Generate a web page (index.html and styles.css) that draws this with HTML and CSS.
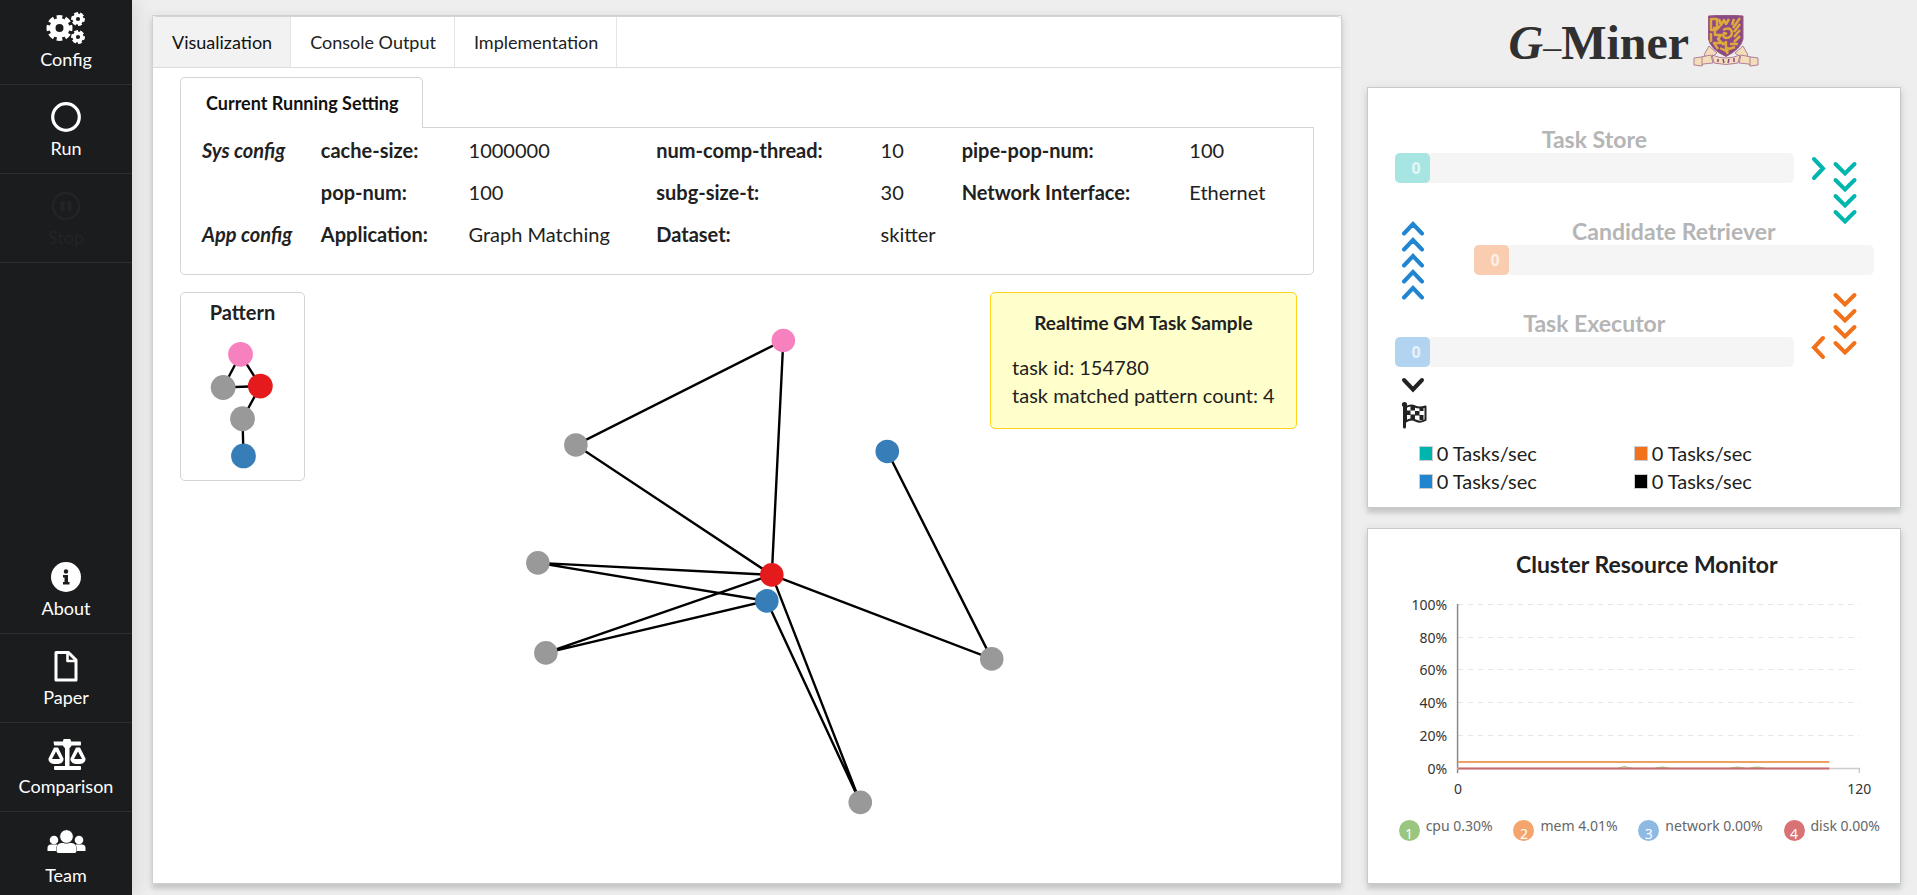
FILE: index.html
```html
<!DOCTYPE html>
<html lang="en">
<head>
<meta charset="utf-8">
<title>G-Miner</title>
<link rel="stylesheet" href="styles.css">
</head>
<body>
<div class="app">
  <nav class="sidebar">
    <div class="menu">
      <button class="menu-item menu-first" type="button">
        <svg class="menu-icon" viewBox="0 0 40 32" fill="none" stroke="#fff">
          <circle cx="13.500" cy="16" r="7" stroke-width="6"/><circle cx="13.500" cy="16" r="10.500" stroke-width="5" pathLength="16" stroke-dasharray="1.300 .7" stroke-dashoffset=".65"/>
          <circle cx="32" cy="7" r="3.800" stroke-width="3.400"/><circle cx="32" cy="7" r="5.400" stroke-width="3" pathLength="12" stroke-dasharray="1.300 .7" stroke-dashoffset=".3"/>
          <circle cx="32" cy="25" r="3.800" stroke-width="3.400"/><circle cx="32" cy="25" r="5.400" stroke-width="3" pathLength="12" stroke-dasharray="1.300 .7" stroke-dashoffset=".3"/>
        </svg>
        <span>Config</span>
      </button>
      <button class="menu-item" type="button">
        <svg class="menu-icon" viewBox="0 0 40 32"><circle cx="20" cy="16" r="13.300" fill="none" stroke="#fff" stroke-width="3.200"/></svg>
        <span>Run</span>
      </button>
      <button class="menu-item menu-off" type="button" disabled>
        <svg class="menu-icon" viewBox="0 0 40 32"><circle cx="20" cy="16" r="13" fill="none" stroke="currentColor" stroke-width="2.500"/><path d="M14.500 11h4v10h-4zM21.500 11h4v10h-4z" fill="currentColor"/></svg>
        <span>Stop</span>
      </button>
    </div>
    <div class="menu">
      <button class="menu-item" type="button">
        <svg class="menu-icon" viewBox="0 0 40 32"><circle cx="20" cy="16" r="15" fill="#fff"/><circle cx="20" cy="10.500" r="2.200" fill="#1b1c1d"/><path d="M17 14h5v7h1.500v2.500h-6.500V21h1.500v-4.500H17z" fill="#1b1c1d"/></svg>
        <span>About</span>
      </button>
      <button class="menu-item" type="button">
        <svg class="menu-icon" viewBox="0 0 40 32" fill="none" stroke="#fff" stroke-width="3" stroke-linejoin="round"><path d="M10 2.500h12.500l7.500 7.500v20H10z"/><path d="M21.500 3v8H30" stroke-width="2.600"/></svg>
        <span>Paper</span>
      </button>
      <button class="menu-item" type="button">
        <svg class="menu-icon" viewBox="0 0 40 32" fill="#fff"><path d="M7.500 2.500h9.500a4 3.500 0 0 1 8 0h9a1 1 0 0 1 1 1v2a1 1 0 0 1-1 1h-8.500a4 4 0 0 1-2 2.500v18H34a1 1 0 0 1 1 1v2a1 1 0 0 1-1 1H9a1 1 0 0 1-1-1v-2a1 1 0 0 1 1-1h10V9a4 4 0 0 1-2-2.500H9a1 1 0 0 1-1-1z"/><path fill-rule="evenodd" d="M8 8.500h4l5.500 11q.7 5.500-7.500 5.500t-7.500-5.500zM10 12.500l-4 7.500h8zM30 8.500h4l5.500 11q.7 5.500-7.500 5.500t-7.500-5.500zM32 12.500l-4 7.500h8z"/></svg>
        <span>Comparison</span>
      </button>
      <button class="menu-item menu-last" type="button">
        <svg class="menu-icon" viewBox="0 0 40 32" fill="#fff"><circle cx="8" cy="12" r="4.300"/><circle cx="33" cy="12" r="4.300"/><path d="M1.500 23v-3q0-3.500 3.500-3.500h6.500q-1.500 2-1.500 6.500zM39.500 23v-3q0-3.500-3.500-3.500h-6.500q1.500 2 1.500 6.500z"/><path d="M10.500 22q0-7 5-7h10q5 0 5 7v1q0 2-2 2h-16q-2 0-2-2z"/><circle cx="20.500" cy="8.500" r="6.800" stroke="#1b1c1d" stroke-width=".8"/></svg>
        <span>Team</span>
      </button>
    </div>
  </nav>

  <main class="main">
    <div class="tabs" role="tablist">
      <button class="tab tab-active" type="button" role="tab" aria-selected="true">Visualization</button>
      <button class="tab" type="button" role="tab">Console Output</button>
      <button class="tab" type="button" role="tab">Implementation</button>
    </div>

    <section class="setting">
      <h2 class="setting-tab">Current Running Setting</h2>
      <div class="setting-body">
        <table class="config">
          <colgroup><col class="c-group"><col class="c-key1"><col class="c-val1"><col class="c-key2"><col class="c-val2"><col class="c-key3"><col></colgroup>
          <tbody>
            <tr><th class="group">Sys config</th><th>cache-size:</th><td>1000000</td><th>num-comp-thread:</th><td>10</td><th>pipe-pop-num:</th><td>100</td></tr>
            <tr><td></td><th>pop-num:</th><td>100</td><th>subg-size-t:</th><td>30</td><th>Network Interface:</th><td>Ethernet</td></tr>
            <tr><th class="group">App config</th><th>Application:</th><td>Graph Matching</td><th>Dataset:</th><td>skitter</td><td></td><td></td></tr>
          </tbody>
        </table>
      </div>
    </section>

    <section class="stage">
      <svg class="graph" viewBox="153 292 1188 590" preserveAspectRatio="xMidYMin meet">
        <g stroke="#000" stroke-width="2.400">
          <path d="M783.500 340.500L576 445L772 575zM538 563L772 575L546 653L767 601zM772 575L992 659L887.500 451.500M772 575L860.500 802.500L767 601" fill="none"/>
        </g>
        <g fill="#999"><circle cx="576" cy="445" r="11.800"/><circle cx="538" cy="563" r="11.800"/><circle cx="546" cy="653" r="11.800"/><circle cx="992" cy="659" r="11.800"/><circle cx="860.500" cy="802.500" r="11.800"/></g>
        <circle cx="783.500" cy="340.500" r="11.800" fill="#f781bf"/>
        <circle cx="772" cy="575" r="11.800" fill="#e41a1c"/>
        <g fill="#377eb8"><circle cx="767" cy="601" r="11.800"/><circle cx="887.500" cy="451.500" r="11.800"/></g>
      </svg>
      <div class="overlay">
        <figure class="pattern">
          <figcaption>Pattern</figcaption>
          <svg class="pattern-graph" viewBox="180 328 124 150">
            <path d="M243 456L242 418.500L260 385.500L222.500 387L240 353.500L260 385.500" fill="none" stroke="#000" stroke-width="2.400"/>
            <circle cx="240" cy="353.500" r="12.500" fill="#f781bf"/><circle cx="222.500" cy="387" r="12.500" fill="#999"/><circle cx="260" cy="385.500" r="12.500" fill="#e41a1c"/><circle cx="242" cy="418.500" r="12.500" fill="#999"/><circle cx="243" cy="456" r="12.500" fill="#377eb8"/>
          </svg>
        </figure>
        <aside class="note">
          <h3>Realtime GM Task Sample</h3>
          <p>task id: 154780</p>
          <p>task matched pattern count: 4</p>
        </aside>
      </div>
    </section>
  </main>

  <div class="side">
    <header class="brand">
      <h1><span class="brand-g">G</span><span class="brand-dash">–</span>Miner</h1>
      <svg class="crest" viewBox="0 0 66 52">
        <path d="M15.500 1q17.500-2 34.500 0v23q-2 10-17 17.500q-15.500-7-17.500-17.500z" fill="#8a4a86"/>
        <g fill="none" stroke="#e0a93c" stroke-width="2.500" stroke-linejoin="round">
          <path d="M18 3v12h5M18 4h6v9h-4M26 4l2 6l3-5l2 4l3-5M18 18v9M22 16v4h6l-3 4l4 4h-8l4 6M30 15q7-4 9 2q0 6-6 6q-4-1-2-5l3 1M27 11l-4 4M29 30l4-3v9l-6-3M40 13l7-10M41 17l6-8M41 22l6-7M41 27l6-6M37 29l8 0M36 34l6-2M34 39l1-7M39 10l2-6"/>
        </g>
        <path d="M15.500 1q17.500-2 34.500 0v23q-2 10-17 17.500q-15.500-7-17.500-17.500z" fill="none" stroke="#9a5a80" stroke-width="1"/>
        <g fill="#f3deb9" stroke="#a87395" stroke-width=".9" stroke-linejoin="round">
          <path d="M16 31l-5 9l5 4l8-6zM50 31l5 9l-5 4l-8-6z"/>
          <path d="M1 43l7-1l10-2l2 8l-10 1l-1 2l-8-1zM65 43l-7-1l-10-2l-2 8l10 1l1 2l8-1z"/>
          <path d="M9 42v8M57 42v8"/>
          <path d="M19 40q14 6 28 0l-2 8q-12 3-24 0z"/>
        </g>
        <path d="M25 44v3M30 44l1 4M36 44l-1 4M41 43v4" stroke="#8a4a86" stroke-width="1.500"/>
      </svg>
    </header>

    <section class="card pipeline">
      <div class="flow">
        <div class="queue queue-store"><h3>Task Store</h3><div class="bar"><span class="fill teal">0</span></div></div>
        <div class="queue queue-retriever"><h3>Candidate Retriever</h3><div class="bar"><span class="fill orange">0</span></div></div>
        <div class="queue queue-executor"><h3>Task Executor</h3><div class="bar"><span class="fill blue">0</span></div></div>
        <svg class="arrows arrows-teal" viewBox="0 0 46 64"><path d="M4 4l9 9.500l-9 9.500M25.500 9l9.500 9.500l9.500-9.500M25.500 25l9.500 9.500l9.500-9.500M25.500 41l9.500 9.500l9.500-9.500M25.500 57l9.500 9.500l9.500-9.500"/></svg>
        <svg class="arrows arrows-orange" viewBox="0 0 46 64"><path d="M25.500 3l9.500 9.500l9.500-9.500M25.500 19l9.500 9.500l9.500-9.500M25.500 35l9.500 9.500l9.500-9.500M25.500 51l9.500 9.500l9.500-9.500M13 46l-9 9.500l9 9.500"/></svg>
        <svg class="arrows arrows-blue" viewBox="0 0 24 80"><path d="M3 12.500l9-9.500l9 9.500M3 28.500l9-9.500l9 9.500M3 44.500l9-9.500l9 9.500M3 60.500l9-9.500l9 9.500M3 76.500l9-9.500l9 9.500"/></svg>
      </div>
      <div class="finish">
        <svg class="arrows arrows-black" viewBox="0 0 24 16"><path d="M3 3l9 9.500l9-9.500"/></svg>
        <svg class="flag" viewBox="0 0 26 28"><circle cx="3.500" cy="3.500" r="2.600" fill="#222"/><path d="M3.500 4v22" stroke="#222" stroke-width="3" stroke-linecap="round"/><path d="M5 6q5-2.500 9-.5t10.500 0v13.500q-5 3-10 .5t-9.500 1z" fill="#fff" stroke="#222" stroke-width="2" stroke-linejoin="round"/><path d="M9.500 5h4.500v4.500H9.500zM18.500 6h4v4h-4zM5 9.500h4.500V14H5zM14 10h4.500v4.500H14zM9.500 13.500H14V18H9.500zM18.500 14h4v5h-4z" fill="#222"/></svg>
      </div>
      <ul class="rates">
        <li><i class="swatch sw-teal"></i>0 Tasks/sec</li>
        <li><i class="swatch sw-orange"></i>0 Tasks/sec</li>
        <li><i class="swatch sw-blue"></i>0 Tasks/sec</li>
        <li><i class="swatch sw-black"></i>0 Tasks/sec</li>
      </ul>
    </section>

    <section class="card monitor">
      <h2>Cluster Resource Monitor</h2>
      <svg class="chart" viewBox="1368 590 532 212">
        <path d="M1458 604.500H1859M1458 637.500H1859M1458 669.500H1859M1458 702.500H1859M1458 735.500H1859" stroke="#e6e6e6" stroke-dasharray="5 5" fill="none"/>
        <path d="M1457.500 604V773" stroke="#888" stroke-width="1.500"/>
        <path d="M1457 768.500H1859V773" stroke="#ccc" stroke-width="1.500" fill="none"/>
        <path d="M1458 762h371" stroke="#f0a063" stroke-width="2"/>
        <path d="M1618 768l6-1.500l8 1.500M1655 768l8-1.200l6 1.200M1730 768l7-1.200l7 1.200M1750 768l7-1.200l7 1.200" stroke="#99c57d" fill="none"/>
        <path d="M1458 768.500h371" stroke="#c86a6e" stroke-width="2"/>
        <g class="axis" text-anchor="end">
          <text x="1447" y="610">100%</text><text x="1447" y="643">80%</text><text x="1447" y="675">60%</text><text x="1447" y="708">40%</text><text x="1447" y="741">20%</text><text x="1447" y="774">0%</text>
        </g>
        <g class="axis" text-anchor="middle"><text x="1458" y="794">0</text><text x="1859" y="794">120</text></g>
      </svg>
      <ul class="series">
        <li><span class="dot dot-cpu">1</span>cpu 0.30%</li>
        <li><span class="dot dot-mem">2</span>mem 4.01%</li>
        <li><span class="dot dot-net">3</span>network 0.00%</li>
        <li><span class="dot dot-disk">4</span>disk 0.00%</li>
      </ul>
    </section>
  </div>
</div>
</body>
</html>
```
FILE: styles.css
```css
* { box-sizing: border-box; }
body {
  margin: 0;
  background: #eee;
  color: #212121;
  font-family: Lato, "Open Sans", sans-serif;
  font-size: 20px;
  line-height: 28px;
}
h1, h2, h3, p, ul, figure { margin: 0; padding: 0; }
h2, h3 { font-weight: 700; }
ul { list-style: none; }
button { font: inherit; color: inherit; border: 0; background: none; cursor: pointer; }

.app { display: flex; min-height: 100vh; }

.sidebar {
  flex: 0 0 132px;
  display: flex;
  flex-direction: column;
  justify-content: space-between;
  background: #1b1c1d;
  box-shadow: 0 0 20px rgba(34, 36, 38, .15);
}
.menu { display: flex; flex-direction: column; }
.menu-item {
  display: flex;
  flex-direction: column;
  align-items: center;
  gap: 5px;
  padding: 16px 0 15px;
  border-bottom: 1px solid #2d2e2f;
  color: #fff;
  font-size: 18px;
  line-height: 20px;
}
.menu-first { padding-top: 12px; }
.menu-last { padding-bottom: 10px; border-bottom: 0; }
.menu-off { color: #232425; cursor: default; }
.menu-icon { width: 40px; height: 32px; }

.main {
  flex: 1189 1 0;
  min-width: 0;
  display: flex;
  flex-direction: column;
  margin: 15px 0 11px 20px;
  background: #fff;
  border: 1px solid #d0d1d1;
  box-shadow: 0 5px 4px rgba(34, 36, 38, .13), 0 2px 10px rgba(34, 36, 38, .1);
}
.tabs {
  display: flex;
  border-top: 1px solid #d4d4d5;
  border-bottom: 1px solid #dcdcdd;
  border-radius: 4px 4px 0 0;
}
.tab {
  padding: 10px 18px 10px 19px;
  border-right: 1px solid #e4e4e4;
  font-size: 18px;
  line-height: 30px;
}
.tab-active { background: #f2f2f2; color: #111; }

.setting { padding: 9px 27px 0; }
.setting-tab {
  width: max-content;
  position: relative;
  padding: 10px 24px 10px 25px;
  margin-bottom: -1px;
  background: #fff;
  border: 1px solid #d4d4d5;
  border-bottom: 0;
  border-radius: 5px 5px 0 0;
  font-size: 18px;
  line-height: 30px;
  color: #111;
}
.setting-body {
  border: 1px solid #d4d4d5;
  border-radius: 0 0 5px 5px;
  padding: 1px 0 19px 21px;
}
.config { width: 100%; table-layout: fixed; border-collapse: collapse; }
.config th, .config td { height: 42px; padding: 0; text-align: left; white-space: nowrap; }
.config .group { font-style: italic; }
.c-group { width: 10.7%; }
.c-key1 { width: 13.3%; }
.c-val1 { width: 16.9%; }
.c-key2 { width: 20.2%; }
.c-val2 { width: 7.3%; }
.c-key3 { width: 20.5%; }

.stage { flex: 1; display: grid; padding-top: 17px; }
.graph, .overlay { grid-area: 1 / 1; }
.graph { width: 100%; height: auto; }
.overlay { display: flex; justify-content: space-between; align-items: flex-start; padding: 0 44px 0 27px; }
.pattern {
  width: 125px;
  padding: 5px 0 2px;
  border: 1px solid #d4d4d5;
  border-radius: 5px;
  background: #fff;
  text-align: center;
  font-weight: 700;
}
.pattern-graph { display: block; width: 100%; margin-top: 3px; }
.note {
  padding: 16px 21px 19px;
  border: 1px solid #ffd21c;
  border-radius: 5px;
  background: #ffffcc;
}
.note h3 { margin-bottom: 16px; text-align: center; font-size: 19px; }

.side { flex: 535 1 0; min-width: 0; display: flex; flex-direction: column; margin: 0 16px 11px 25px; }
.brand { display: flex; justify-content: center; align-items: flex-start; gap: 4px; height: 87px; padding-top: 15px; }
.brand h1 { font: 700 48px/56px "Liberation Serif", serif; color: #303030; }
.brand-g { font-style: italic; }
.brand-dash { font-size: 36px; font-weight: 400; }
.crest { width: 66px; height: 52px; }

.card {
  background: #fff;
  border: 1px solid #c8c9c9;
  box-shadow: 0 5px 4px rgba(34, 36, 38, .13), 0 2px 10px rgba(34, 36, 38, .1);
}
.pipeline { padding: 36px 26px 12px 27px; margin-bottom: 20px; }
.flow { display: grid; grid-template-columns: 79px 1fr 80px; row-gap: 33px; }
.queue h3 { height: 29px; color: #b5b5b5; font-size: 23px; line-height: 30px; text-align: center; white-space: nowrap; }
.queue-store { grid-area: 1 / 1 / 2 / 3; }
.queue-retriever { grid-area: 2 / 2 / 3 / 4; }
.queue-executor { grid-area: 3 / 1 / 4 / 3; }
.bar { display: flex; height: 30px; border-radius: 5px; background: #f5f5f5; }
.fill {
  width: 35px;
  padding-right: 9px;
  border-radius: 5px;
  color: rgba(255, 255, 255, .7);
  font: 700 16px/31px "Open Sans", sans-serif;
  text-align: right;
}
.teal { background: #a6e5e1; }
.orange { background: #fbcdb0; }
.blue { background: #b3d4f0; }
.arrows { fill: none; stroke-width: 4; stroke-linecap: round; overflow: visible; }
.arrows-teal { grid-area: 1 / 3 / 3 / 4; justify-self: end; width: 46px; height: 64px; margin: 31px 18px 0 0; stroke: #00b5ad; }
.arrows-orange { grid-area: 2 / 3 / 4 / 4; align-self: end; justify-self: end; width: 46px; height: 64px; margin: 0 18px 11px 0; stroke: #f2711c; }
.arrows-blue { grid-area: 2 / 1 / 4 / 2; width: 24px; height: 80px; margin: 5px 0 0 6px; stroke: #2185d0; }
.arrows-black { width: 24px; height: 16px; stroke: #222; }
.finish { display: flex; flex-direction: column; gap: 8px; padding: 10px 0 0 6px; }
.flag { width: 26px; height: 28px; }
.rates { display: grid; grid-template-columns: 215px 1fr; padding: 10px 0 0 24px; }
.rates li { display: flex; align-items: center; gap: 4px; }
.swatch { width: 14px; height: 15px; border: 1px solid #ccc; }
.sw-teal { background: #00b5ad; }
.sw-orange { background: #f2711c; }
.sw-blue { background: #2185d0; }
.sw-black { background: #000; }

.monitor { flex: 1; padding-top: 20px; }
.monitor h2 { font-size: 23px; line-height: 30px; padding-left: 26px; text-align: center; }
.chart { display: block; width: 100%; margin-top: 11px; }
.axis { fill: #333; font: 14px "Noto Sans", sans-serif; }
.series { display: flex; justify-content: space-between; padding: 14px 20px 0 31px; }
.series li { display: flex; gap: 6px; color: #666; font: 14px/20px "Noto Sans", sans-serif; }
.dot { width: 21px; height: 21px; margin-top: 4px; border-radius: 50%; color: #fff; line-height: 28px; text-align: center; }
.dot-cpu { background: #9bc67f; }
.dot-mem { background: #f3a56d; }
.dot-net { background: #8db9e3; }
.dot-disk { background: #d97274; }
```
